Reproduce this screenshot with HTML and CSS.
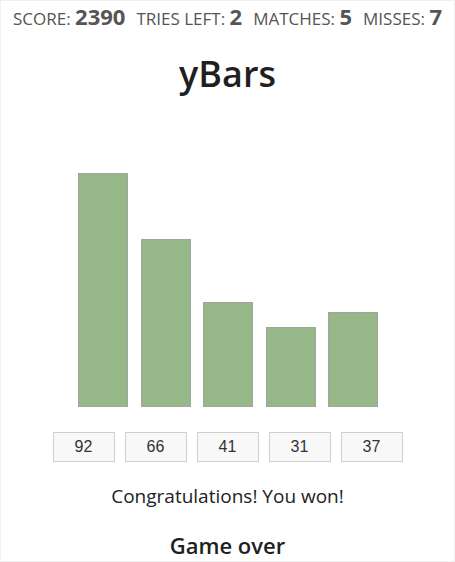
FILE: index.html
```html
<!DOCTYPE html>
<html lang="en">
<head>
<meta charset="utf-8">
<title>yBars</title>
<link rel="stylesheet" href="styles.css">
</head>
<body>
<div class="page">
  <div class="stats">
    <span class="stat">SCORE: <b>2390</b></span>
    <span class="stat">TRIES LEFT: <b>2</b></span>
    <span class="stat">MATCHES: <b>5</b></span>
    <span class="stat">MISSES: <b>7</b></span>
  </div>
  <h1 class="title">yBars</h1>
  <div class="chart">
    <div class="bar" style="height:234px"></div>
    <div class="bar" style="height:168px"></div>
    <div class="bar" style="height:105px"></div>
    <div class="bar" style="height:80px"></div>
    <div class="bar" style="height:95px"></div>
  </div>
  <div class="guesses">
    <input class="guess" type="text" value="92">
    <input class="guess" type="text" value="66">
    <input class="guess" type="text" value="41">
    <input class="guess" type="text" value="31">
    <input class="guess" type="text" value="37">
  </div>
  <p class="message">Congratulations! You won!</p>
  <p class="status">Game over</p>
</div>
</body>
</html>
```

FILE: styles.css
```css
html, body {
  margin: 0;
  padding: 0;
  background: #fff;
}

.page {
  box-sizing: border-box;
  width: 455px;
  height: 562px;
  border: 1px solid #f0f0f0;
  font-family: "Open Sans", "Noto Sans", sans-serif;
  color: #222;
  overflow: hidden;
}

.stats {
  display: flex;
  align-items: baseline;
  gap: 11px;
  padding: 0 0 0 12px;
  font-size: 17px;
  color: #555;
}

.stat b {
  font-size: 22px;
  font-weight: 700;
}

.title {
  margin: 19px 0 0;
  text-align: center;
  font-size: 36px;
  font-weight: 600;
  line-height: 48px;
  color: #1f1f1f;
}

.chart {
  display: flex;
  align-items: flex-end;
  justify-content: center;
  gap: 12.5px;
  height: 240px;
  margin: 69px 0 0 1px;
}

.bar {
  box-sizing: border-box;
  width: 50px;
  background: #96b787;
  border: 1px solid #a3a3a3;
}

.guesses {
  display: flex;
  justify-content: center;
  gap: 10px;
  margin: 25px 0 0;
}

.guess {
  box-sizing: border-box;
  width: 62px;
  height: 30px;
  margin: 0;
  padding: 0;
  border: 1px solid #d0d0d0;
  background: #f8f8f8;
  font-family: "Liberation Sans", Arial, sans-serif;
  font-size: 16px;
  color: #333;
  text-align: center;
}

.message {
  margin: 21px 0 0;
  text-align: center;
  font-size: 19px;
  line-height: 26px;
  color: #222;
}

.status {
  margin: 22px 0 0;
  text-align: center;
  font-size: 22px;
  font-weight: 600;
  line-height: 28px;
  color: #1f1f1f;
}
```
